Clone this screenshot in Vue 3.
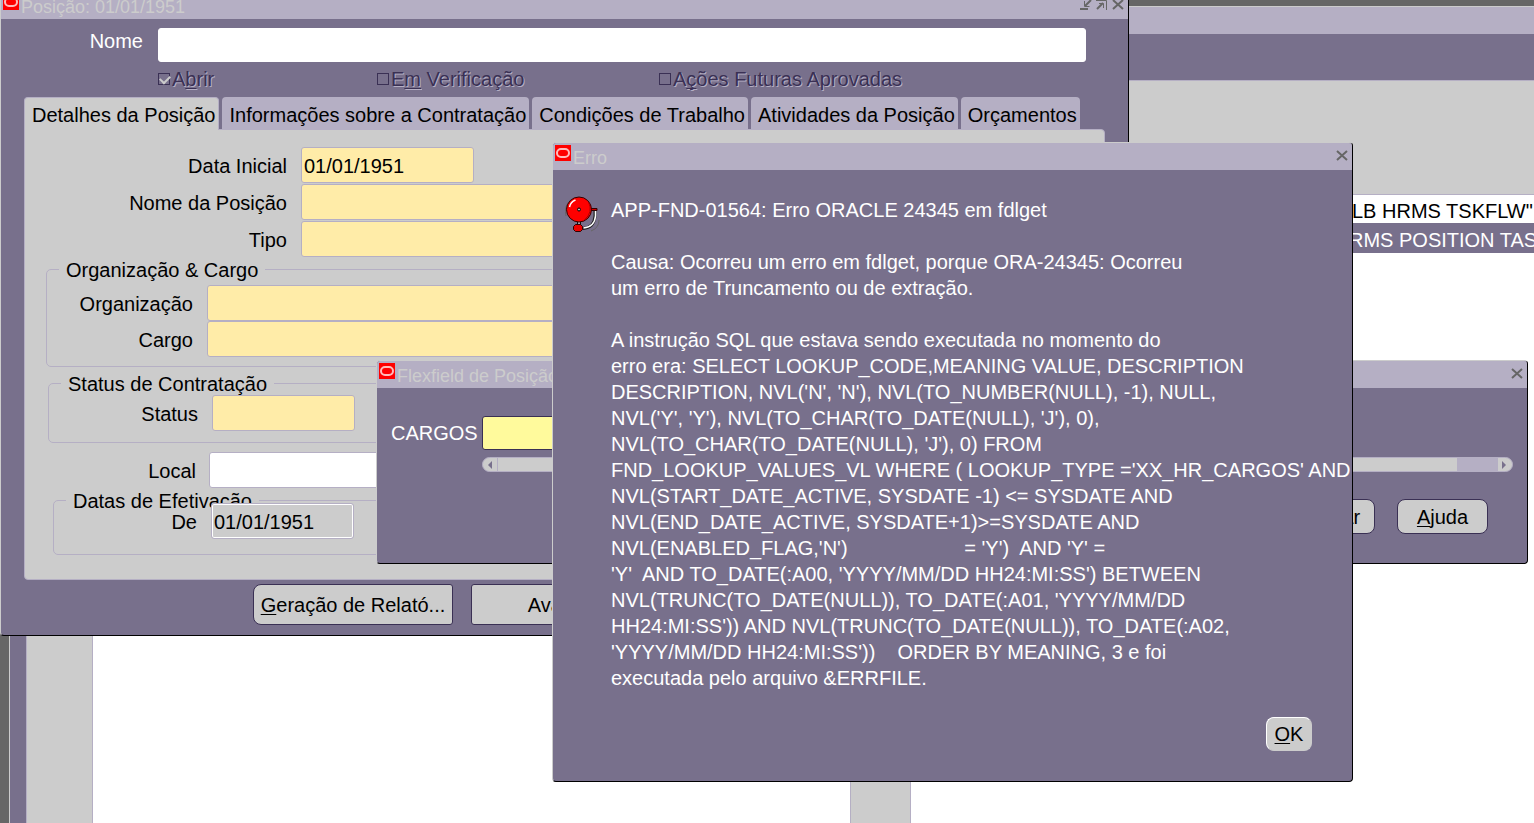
<script setup>
const tabs = [
  'Detalhes da Posição',
  'Informações sobre a Contratação',
  'Condições de Trabalho',
  'Atividades da Posição',
  'Orçamentos',
]

const message = [
  'APP-FND-01564: Erro ORACLE 24345 em fdlget',
  '',
  'Causa: Ocorreu um erro em fdlget, porque ORA-24345: Ocorreu',
  'um erro de Truncamento ou de extração.',
  '',
  'A instrução SQL que estava sendo executada no momento do',
  'erro era: SELECT LOOKUP_CODE,MEANING VALUE, DESCRIPTION',
  "DESCRIPTION, NVL('N', 'N'), NVL(TO_NUMBER(NULL), -1), NULL,",
  "NVL('Y', 'Y'), NVL(TO_CHAR(TO_DATE(NULL), 'J'), 0),",
  "NVL(TO_CHAR(TO_DATE(NULL), 'J'), 0) FROM",
  "FND_LOOKUP_VALUES_VL WHERE ( LOOKUP_TYPE ='XX_HR_CARGOS' AND",
  'NVL(START_DATE_ACTIVE, SYSDATE -1) <= SYSDATE AND',
  'NVL(END_DATE_ACTIVE, SYSDATE+1)>=SYSDATE AND',
  "NVL(ENABLED_FLAG,'N')" + ' '.repeat(21) + "= 'Y')  AND 'Y' =",
  "'Y'  AND TO_DATE(:A00, 'YYYY/MM/DD HH24:MI:SS') BETWEEN",
  "NVL(TRUNC(TO_DATE(NULL)), TO_DATE(:A01, 'YYYY/MM/DD",
  "HH24:MI:SS')) AND NVL(TRUNC(TO_DATE(NULL)), TO_DATE(:A02,",
  "'YYYY/MM/DD HH24:MI:SS'))    ORDER BY MEANING, 3 e foi",
  'executada pelo arquivo &ERRFILE.',
].join('\n')
</script>

<template>
  <div class="desktop">
    <section class="window navigator">
      <header class="titlebar"></header>
      <div class="nav-panel">
        <div class="nav-list"></div>
        <ul class="nav-list tasks">
          <li>LB HRMS TSKFLW"</li>
          <li class="selected">RMS POSITION TASK</li>
        </ul>
      </div>
    </section>

    <section class="window position">
      <header class="titlebar">
        <svg class="logo" viewBox="0 0 16 16" aria-hidden="true">
          <rect width="16" height="16" fill="#f00" />
          <rect x="2" y="4" width="12" height="8" rx="4" fill="none" stroke="#fbb" stroke-width="2" />
        </svg>
        <h2>Posição: 01/01/1951</h2>
        <span class="controls">
          <button type="button" aria-label="Minimizar">
            <svg width="12" height="12" viewBox="0 0 12 12"><path d="M0 10h8M11 1L5 7" /><path class="thin" d="M4.500 2v5.500h5" /></svg>
          </button>
          <button type="button" aria-label="Maximizar">
            <svg width="12" height="12" viewBox="0 0 12 12"><path d="M1 10l6-6" /><path class="thin" d="M0 1.500h10.500V11M3 4.500h4.500V9" /></svg>
          </button>
          <button type="button" aria-label="Fechar">
            <svg width="12" height="12" viewBox="0 0 12 12"><path d="M1 1l10 9M11 1L1 10" /></svg>
          </button>
        </span>
      </header>
      <div class="position-body">
        <div class="name-row">
          <label for="name">Nome</label>
          <input id="name" class="name" type="text" />
        </div>
        <div class="checks">
          <label><input type="checkbox" checked disabled /><span>A<u>b</u>rir</span></label>
          <label><input type="checkbox" disabled /><span>E<u>m</u> Verificação</span></label>
          <label><input type="checkbox" disabled /><span>A<u>ç</u>ões Futuras Aprovadas</span></label>
        </div>
        <nav class="tabs" role="tablist">
          <button
            v-for="(tab, i) in tabs"
            :key="tab"
            type="button"
            role="tab"
            :aria-selected="i === 0"
            :class="{ active: i === 0 }"
          >{{ tab }}</button>
        </nav>
        <div class="panel">
          <div class="main-rows">
            <div class="row">
              <label for="start">Data Inicial</label>
              <input id="start" class="required date" type="text" value="01/01/1951" />
            </div>
            <div class="row">
              <label for="pos">Nome da Posição</label>
              <input id="pos" class="required" type="text" />
            </div>
            <div class="row">
              <label for="type">Tipo</label>
              <input id="type" class="required" type="text" />
            </div>
          </div>
          <fieldset class="org">
            <legend>Organização &amp; Cargo</legend>
            <div class="row">
              <label for="org">Organização</label>
              <input id="org" class="required" type="text" />
            </div>
            <div class="row">
              <label for="job">Cargo</label>
              <input id="job" class="required" type="text" />
            </div>
          </fieldset>
          <fieldset class="status">
            <legend>Status de Contratação</legend>
            <div class="row">
              <label for="status">Status</label>
              <input id="status" class="required short" type="text" />
            </div>
          </fieldset>
          <div class="row local">
            <label for="local">Local</label>
            <input id="local" type="text" />
          </div>
          <fieldset class="dates">
            <legend>Datas de Efetivação</legend>
            <div class="row">
              <label for="from">De</label>
              <input id="from" class="readonly short" type="text" value="01/01/1951" readonly />
            </div>
          </fieldset>
        </div>
        <footer class="actions">
          <button type="button" class="btn wide"><span><u>G</u>eração de Relató...</span></button>
          <button type="button" class="btn wide square"><span>Avaliação</span></button>
        </footer>
      </div>
    </section>

    <section class="window flexfield">
      <header class="titlebar">
        <svg class="logo" viewBox="0 0 16 16" aria-hidden="true">
          <rect width="16" height="16" fill="#f00" />
          <rect x="2" y="4" width="12" height="8" rx="4" fill="none" stroke="#fbb" stroke-width="2" />
        </svg>
        <h2>Flexfield de Posição</h2>
        <span class="controls">
          <button type="button" aria-label="Fechar">
            <svg width="12" height="12" viewBox="0 0 12 12"><path d="M1 1l10 9M11 1L1 10" /></svg>
          </button>
        </span>
      </header>
      <div class="flex-body">
        <div class="flex-row">
          <label for="cargos">CARGOS</label>
          <input id="cargos" class="current" type="text" />
        </div>
        <div class="scrollbar">
          <button type="button" aria-label="Rolar para a esquerda">
            <svg width="14" height="13" viewBox="0 0 14 13"><path d="M9 3v8L5 7z" /></svg>
          </button>
          <span class="thumb"></span>
          <span class="track"></span>
          <button type="button" aria-label="Rolar para a direita">
            <svg width="14" height="13" viewBox="0 0 14 13"><path d="M4 3v8l4-4z" /></svg>
          </button>
        </div>
        <footer class="flex-actions">
          <button type="button" class="btn"><span>Limpar</span></button>
          <button type="button" class="btn"><span><u>A</u>juda</span></button>
        </footer>
      </div>
    </section>

    <section class="window error" role="alertdialog" aria-labelledby="error-title">
      <header class="titlebar">
        <svg class="logo" viewBox="0 0 16 16" aria-hidden="true">
          <rect width="16" height="16" fill="#f00" />
          <rect x="2" y="4" width="12" height="8" rx="4" fill="none" stroke="#fbb" stroke-width="2" />
        </svg>
        <h2 id="error-title">Erro</h2>
        <span class="controls">
          <button type="button" aria-label="Fechar">
            <svg width="12" height="12" viewBox="0 0 12 12"><path d="M1 1l10 9M11 1L1 10" /></svg>
          </button>
        </span>
      </header>
      <div class="error-body">
        <svg class="bell" width="36" height="38" viewBox="0 0 36 38" aria-hidden="true">
          <path d="M1 20A15 15 0 0 1 7 3M34 24q0 8-8 11" fill="none" stroke="#666" />
          <path d="M30 15v5q-1 12-12 12.500" fill="none" stroke="#222" stroke-width="3" />
          <path d="M30.500 15v5q-1 11-12 12" fill="none" stroke="#fff" stroke-width="1.500" />
          <path d="M26 12.500h6v2h-6z" fill="#c00" stroke="#300" />
          <path d="M12.500 26v4M15.500 26v4" stroke="#111" />
          <path d="M14 26v4" stroke="#ccc" />
          <circle cx="14" cy="13.500" r="12.500" fill="#f00" stroke="#300" />
          <path d="M23.500 6q5 10-4 18" fill="none" stroke="#a00" />
          <path d="M4.500 11q1-5 6-7" fill="none" stroke="#fff" stroke-width="1.500" />
          <circle cx="14" cy="13.500" r="1.500" fill="#bbb" stroke="#000" />
          <path d="M10.500 28.500h5l2 2v3l-2 2h-5l-2-2v-3z" fill="#e00" stroke="#300" />
        </svg>
        <p>{{ message }}</p>
      </div>
      <footer class="error-actions">
        <button type="button" class="btn ok"><span><u>O</u>K</span></button>
      </footer>
    </section>
  </div>
</template>

<style>
body {
  margin: 0;
  overflow: hidden;
}
</style>

<style scoped>
.desktop {
  position: relative;
  height: 100vh;
  overflow: hidden;
  background: #666;
  color: #000;
  font: 20px/26px "Liberation Sans", Arial, sans-serif;
}
* {
  box-sizing: border-box;
}
button,
input {
  font: inherit;
  color: inherit;
  margin: 0;
}
button {
  padding: 0;
  border: 0;
  background: none;
}
u {
  text-decoration-thickness: 1px;
  text-underline-offset: 2px;
  text-decoration-skip-ink: none;
}

/* windows */
.window {
  position: absolute;
  display: flex;
  flex-direction: column;
  overflow: hidden;
  background: #78708c;
  border: 1px solid #000;
  border-top-color: #ccc;
  border-left-color: #ccc;
  border-radius: 4px;
}
.navigator {
  inset: 6px 0 0 9px;
  border-width: 1px 0 0 1px;
  border-radius: 0;
}
.position {
  top: -9px;
  left: 0;
  right: 405px;
}
.flexfield {
  top: 360px;
  left: 376px;
  right: 6px;
}
.error {
  top: 142px;
  left: 552px;
  right: 181px;
}
.titlebar {
  flex: none;
  display: flex;
  align-items: flex-start;
  height: 27px;
  padding: 2px;
  background: #b5afc4;
}
.logo {
  flex: none;
  width: 16px;
  height: 16px;
}
.titlebar h2 {
  flex: 1;
  margin: 0 0 0 2px;
  font-size: 18px;
  line-height: 26px;
  font-weight: 400;
  color: #ccc;
  white-space: nowrap;
}
.controls {
  display: flex;
  gap: 4px;
  padding: 5px 2px;
}
.controls button,
.controls svg {
  display: block;
}
.controls path {
  fill: none;
  stroke: #666;
  stroke-width: 2;
}
.controls path.thin {
  stroke-width: 1;
}

/* navigator */
.nav-panel {
  flex: 1;
  display: grid;
  grid-template-columns: 759px 1fr;
  gap: 59px;
  margin: 46px 0 0 16px;
  padding: 113px 0 0 65px;
  background: #ccc;
  border: solid #b5afc4;
  border-width: 1px 0 0 1px;
}
.nav-list {
  margin: 0;
  padding: 0;
  overflow: hidden;
  list-style: none;
  white-space: nowrap;
  background: #fff;
  border: solid #b5afc4;
  border-width: 1px 1px 0;
}
.nav-list.tasks {
  border-right: 0;
}
.tasks li {
  padding: 4px 0 0 441px;
  line-height: 24px;
}
.tasks .selected {
  padding: 4px 0 0 438px;
  line-height: 26px;
  background: #78708c;
  color: #fff;
}

/* fields */
input[type="text"] {
  min-width: 0;
  flex: 1;
  height: 36px;
  padding: 2px 2px 0;
  background: #fff;
  border: 1px solid #b5afc4;
  border-radius: 3px;
  outline: 0;
}
input.required {
  background: #ffeca8;
}
input.date {
  flex: 0 0 173px;
}
input.short {
  flex: 0 0 143px;
}
input.readonly {
  background: #ccc;
  box-shadow: inset 0 0 0 1px #fff;
}
.row {
  display: flex;
  align-items: center;
}
.row label {
  flex: none;
  padding-top: 2px;
  text-align: right;
}

/* position form */
.position-body {
  padding: 9px 23px 10px;
}
.name-row {
  display: flex;
  margin-right: 19px;
  color: #fff;
}
.name-row label {
  width: 119px;
  margin-right: 15px;
  text-align: right;
}
.name-row input.name {
  height: 34px;
  border-color: #fff;
}
.checks {
  display: grid;
  grid-template-columns: 219px 282px 1fr;
  margin: 4px 0 5px 134px;
  color: #3a3054;
  text-shadow: 1px 1px 0 #b5afc4;
}
.checks label {
  display: flex;
  align-items: center;
  gap: 2px;
}
.checks input {
  appearance: none;
  display: grid;
  width: 12px;
  height: 12px;
  border: 1px solid #3a3054;
}
.checks input:checked::before {
  content: "";
  width: 8px;
  height: 5px;
  margin: 1px;
  border: solid #ccc;
  border-width: 0 0 2px 2px;
  transform: rotate(-45deg);
}
.tabs {
  display: flex;
  gap: 3px;
}
.tabs button {
  height: 32px;
  padding: 4px 3px 0 7px;
  background: #b5afc4;
  border-radius: 4px 4px 0 0;
  white-space: nowrap;
}
.tabs button.active {
  position: relative;
  height: 33px;
  margin-bottom: -1px;
  padding-bottom: 3px;
  background: #ccc;
  border: solid #b5afc4;
  border-width: 1px 1px 0;
}
.panel {
  padding: 17px 12px 24px 0;
  background: #ccc;
  border: 1px solid #b5afc4;
  border-radius: 0 4px 4px 4px;
}
.main-rows {
  display: grid;
  gap: 1px;
}
.main-rows label {
  width: 262px;
  margin-right: 14px;
}
fieldset {
  min-width: 0;
  margin: 2px 0 0 21px;
  padding: 6px 10px 9px 0;
  border: 1px solid #b5afc4;
  border-radius: 5px;
}
legend {
  height: 20px;
  margin-left: 12px;
  padding: 0 7px;
  line-height: 22px;
}
.org label {
  width: 146px;
  margin-right: 14px;
}
.status {
  margin: 6px 0 0 23px;
  padding: 2px 0 11px;
}
.status label {
  width: 149px;
  margin-right: 14px;
}
.local {
  margin-top: 9px;
}
.local label {
  width: 171px;
  margin-right: 13px;
}
.dates {
  margin: 2px 0 0 28px;
  padding: 0 0 15px;
}
.dates .row {
  margin-top: -7px;
}
.dates label {
  width: 143px;
  margin-right: 14px;
}

/* buttons */
.btn {
  width: 91px;
  height: 35px;
  background: #ccc;
  border: 1px solid #3a3054;
  border-radius: 8px;
  white-space: nowrap;
}
.actions {
  display: flex;
  gap: 18px;
  margin: 4px 0 0 229px;
}
.wide {
  width: 200px;
  height: 41px;
  border-radius: 8px 3px 3px 8px;
}
.square {
  border-radius: 3px;
}

/* flexfield */
.flex-body {
  padding: 28px 14px 29px;
}
.flex-row {
  display: flex;
  align-items: center;
  gap: 5px;
  margin-right: 240px;
  color: #fff;
}
.flex-row label {
  width: 86px;
}
.flex-row input.current {
  height: 34px;
  background: #fffa9c;
  border-color: #3a3054;
}
.scrollbar {
  display: flex;
  height: 15px;
  margin: 7px 0 0 91px;
  overflow: hidden;
  background: #ccc;
  border: 1px solid #b5afc4;
  border-radius: 8px;
}
.scrollbar svg {
  display: block;
  fill: #78708c;
}
.thumb {
  flex: 1;
  border-left: 1px solid #b5afc4;
}
.track {
  width: 41px;
  background: #b5afc4;
}
.flex-actions {
  display: flex;
  justify-content: flex-end;
  gap: 22px;
  margin: 27px 25px 0 0;
}

/* error dialog */
.error-body {
  display: flex;
  gap: 10px;
  padding: 26px 0 0 12px;
  color: #fff;
}
.bell {
  flex: none;
}
.error-body p {
  margin: 1px 0 0;
  white-space: pre;
}
.error-actions {
  display: flex;
  justify-content: flex-end;
  padding: 26px 40px 30px;
}
.ok {
  width: 46px;
  height: 34px;
  border-color: #fff #ccc #ccc #fff;
}
</style>
